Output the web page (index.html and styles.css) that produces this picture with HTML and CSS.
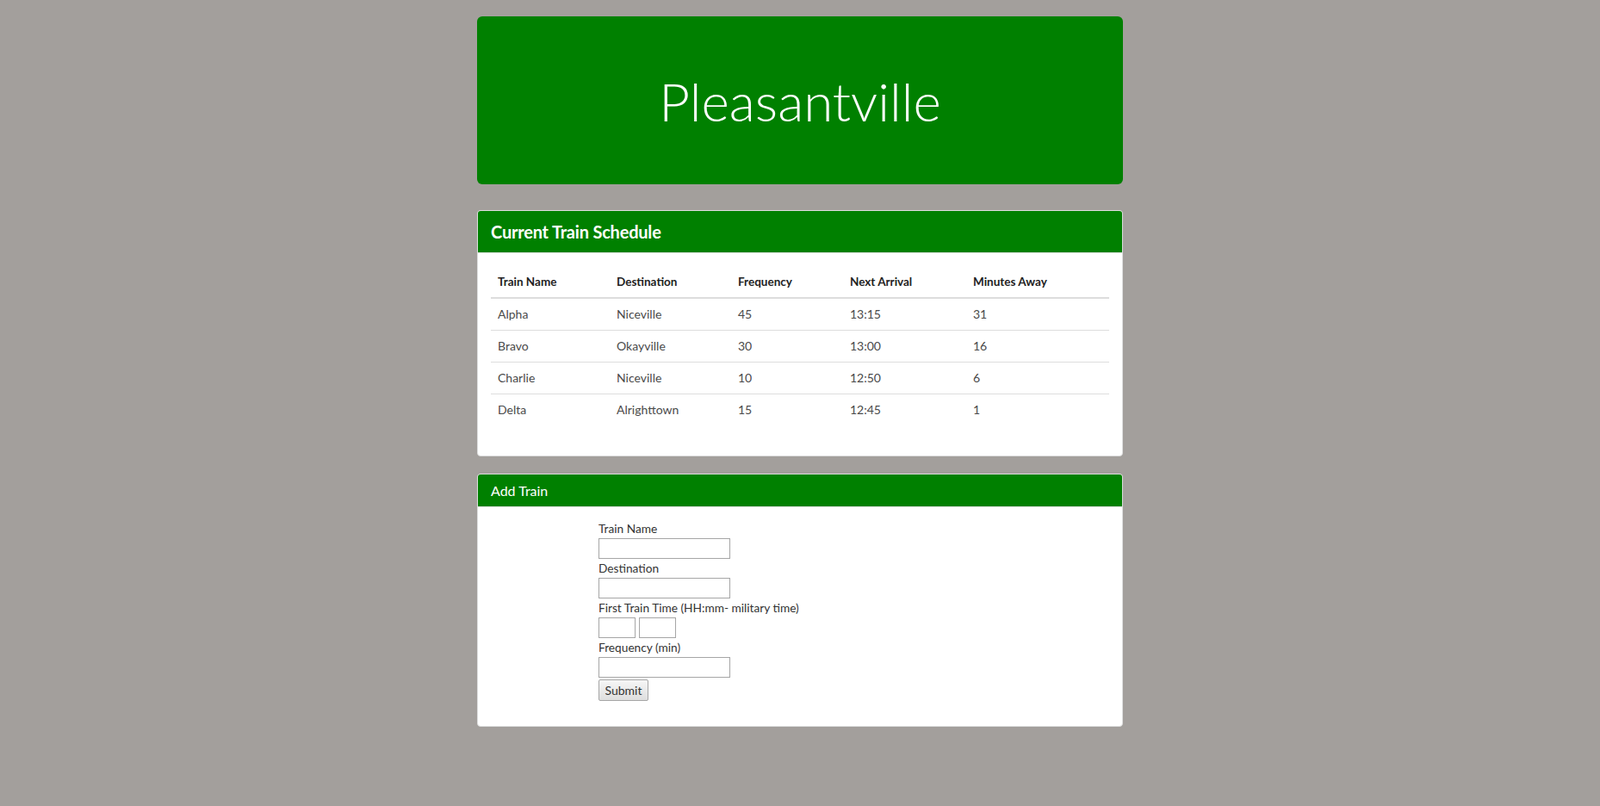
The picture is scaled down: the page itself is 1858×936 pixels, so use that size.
FILE: index.html
```html
<!DOCTYPE html>
<html lang="en">
<head>
<meta charset="utf-8">
<title>Train Scheduler</title>
<link rel="stylesheet" href="styles.css">
</head>
<body>
<div class="page">
  <header class="jumbotron">
    <h1 class="jumbotron-title">Pleasantville</h1>
  </header>

  <section class="panel">
    <div class="panel-heading panel-heading-large">
      <h3 class="panel-title-large">Current Train Schedule</h3>
    </div>
    <div class="panel-body">
      <table class="schedule">
        <thead>
          <tr>
            <th class="col-name">Train Name</th>
            <th class="col-dest">Destination</th>
            <th class="col-freq">Frequency</th>
            <th class="col-next">Next Arrival</th>
            <th class="col-away">Minutes Away</th>
          </tr>
        </thead>
        <tbody>
          <tr><td>Alpha</td><td>Niceville</td><td>45</td><td>13:15</td><td>31</td></tr>
          <tr><td>Bravo</td><td>Okayville</td><td>30</td><td>13:00</td><td>16</td></tr>
          <tr><td>Charlie</td><td>Niceville</td><td>10</td><td>12:50</td><td>6</td></tr>
          <tr><td>Delta</td><td>Alrighttown</td><td>15</td><td>12:45</td><td>1</td></tr>
        </tbody>
      </table>
    </div>
  </section>

  <section class="panel">
    <div class="panel-heading panel-heading-small">
      <h3 class="panel-title-small">Add Train</h3>
    </div>
    <div class="panel-body">
      <form class="train-form">
        <label class="field-label" for="train-name">Train Name</label>
        <input class="field-input" id="train-name" type="text">
        <label class="field-label" for="destination">Destination</label>
        <input class="field-input" id="destination" type="text">
        <label class="field-label" for="hours">First Train Time (HH:mm- military time)</label>
        <div class="time-row">
          <input class="field-input time-input" id="hours" type="text">
          <input class="field-input time-input" id="minutes" type="text">
        </div>
        <label class="field-label" for="frequency">Frequency (min)</label>
        <input class="field-input" id="frequency" type="text">
        <button class="submit-btn" type="button">Submit</button>
      </form>
    </div>
  </section>
</div>
</body>
</html>
```
FILE: styles.css
```css
* { box-sizing: border-box; }

html, body {
  margin: 0;
  padding: 0;
}

body {
  background: #a39f9c;
  font-family: "Lato", "Liberation Sans", sans-serif;
  font-size: 14px;
  line-height: 20px;
  color: #333;
}

.page {
  width: 750px;
  margin: 0 auto;
  padding-top: 19px;
}

/* Jumbotron */
.jumbotron {
  background: #008000;
  border-radius: 6px;
  padding: 48px 0;
  margin-bottom: 30px;
  text-align: center;
}

.jumbotron-title {
  margin: 16px 0 14px;
  font-family: "Lato", sans-serif;
  font-weight: 300;
  font-size: 62px;
  line-height: 69px;
  color: #fff;
}

/* Panels */
.panel {
  background: #fff;
  border: 1px solid #ddd;
  border-radius: 4px;
  margin-bottom: 20px;
}

.panel-heading {
  background: #008000;
  color: #fff;
  padding: 10px 15px;
  border-bottom: 1px solid #ddd;
  border-radius: 3px 3px 0 0;
}

.panel-title-large {
  margin: 0;
  font-size: 20px;
  font-weight: 700;
  line-height: 28px;
  letter-spacing: -0.2px;
}

.panel-title-small {
  margin: 0;
  font-size: 16px;
  font-weight: 400;
  line-height: 17px;
}

.panel-body {
  padding: 15px;
}

/* Table */
.schedule {
  width: 100%;
  border-collapse: collapse;
  margin-bottom: 20px;
}

.schedule th,
.schedule td {
  padding: 8px;
  text-align: left;
  line-height: 20px;
  font-size: 14px;
}

.schedule th {
  font-weight: 700;
  color: #222;
  border-bottom: 2px solid #ddd;
  font-size: 13.5px;
}

.schedule td {
  border-top: 1px solid #ddd;
  color: #4a4a4a;
}

.col-name { width: 138px; }
.col-dest { width: 141px; }
.col-freq { width: 130px; }
.col-next { width: 143px; }
.col-away { width: 166px; }

/* Form */
.train-form {
  margin-left: 125px;
  padding-bottom: 13px;
}

.field-label {
  display: block;
  font-size: 13.7px;
  line-height: 20px;
  color: #333;
}

.field-input {
  display: block;
  width: 153px;
  height: 24px;
  margin: 1px 0;
  padding: 1px 2px;
  border: 1px solid #a6a6a6;
  border-radius: 0;
  background: #fff;
  font-family: inherit;
  font-size: 14px;
}

.time-row {
  display: flex;
  gap: 4px;
  margin: 1px 0;
}

.time-input {
  width: 43px;
  margin: 0;
}

.submit-btn {
  display: block;
  width: 58px;
  height: 25px;
  margin: 2px 0 1px;
  padding: 1px 6px;
  border: 1px solid #a6a6a6;
  border-radius: 2px;
  background: linear-gradient(#f6f6f6, #dedede);
  font-family: inherit;
  font-size: 14px;
  line-height: 20px;
  color: #333;
}
```
